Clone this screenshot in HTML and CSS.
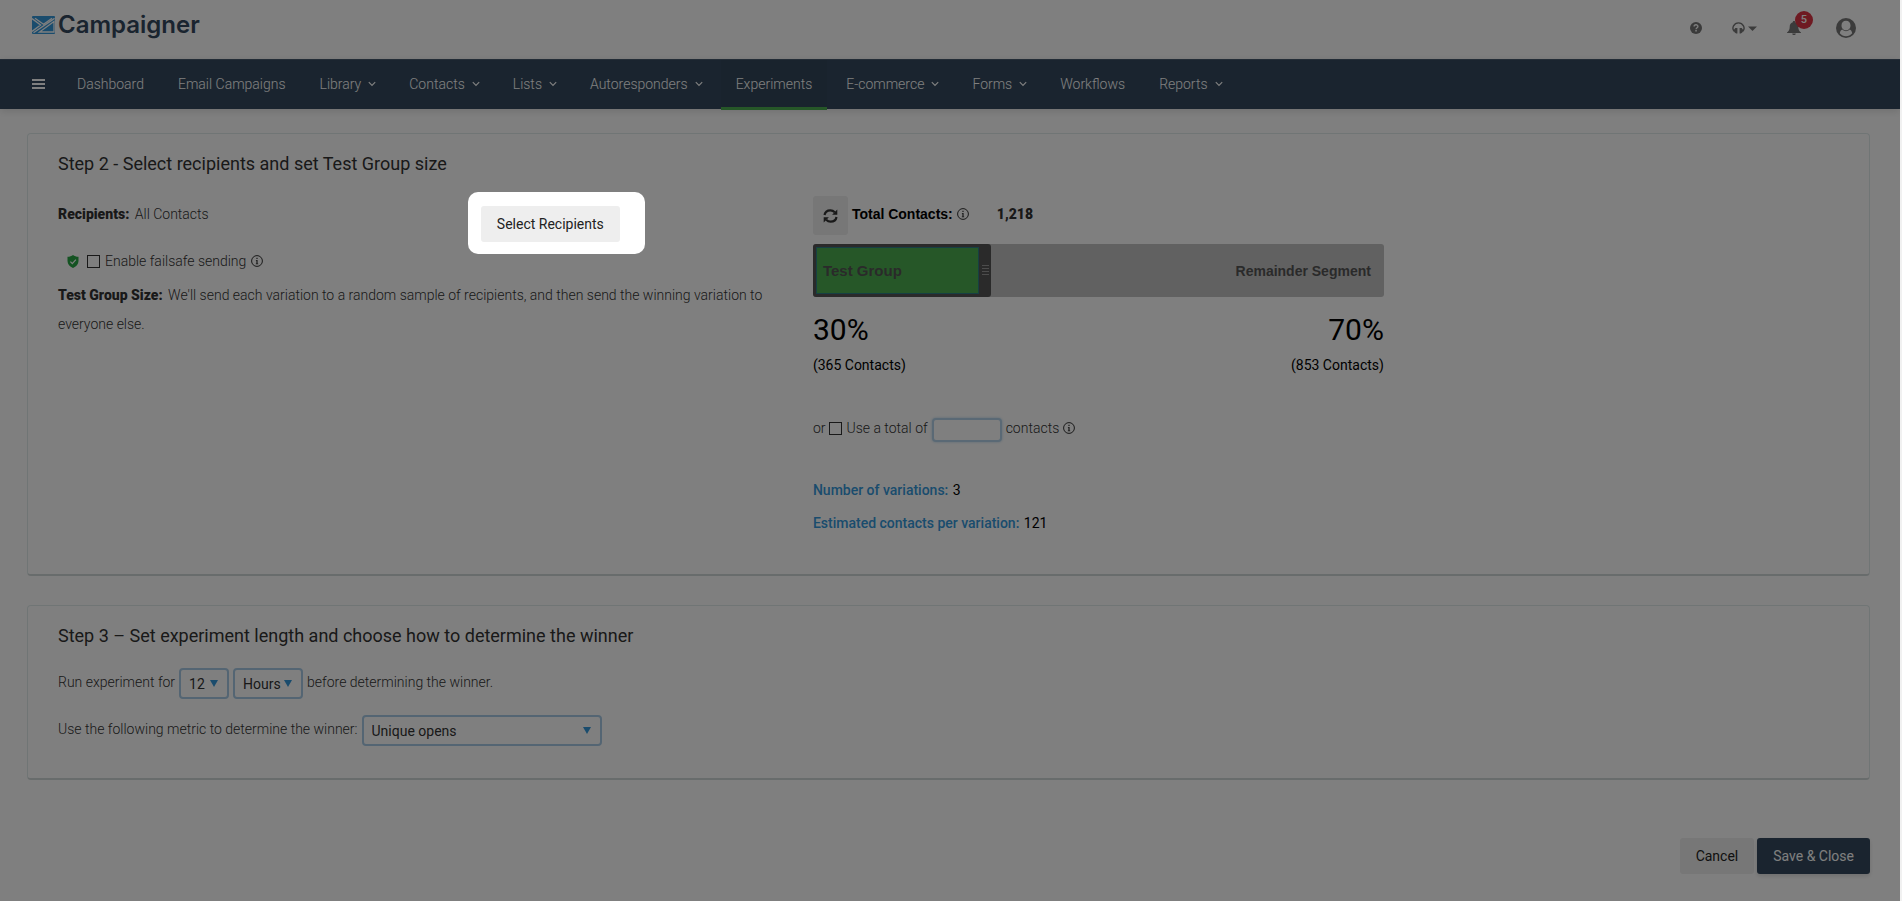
FILE: index.html
```html
<!DOCTYPE html>
<html lang="en">
<head>
  <meta charset="UTF-8" />
  <meta name="viewport" content="width=device-width, initial-scale=1.0"/>
  <title>Experiments | Campaigner</title>
  <link rel="stylesheet" href="styles.css">
</head>
<body>
  <svg class="sprite" aria-hidden="true">
    <symbol id="icon-info" viewBox="0 0 12 12">
      <circle cx="6" cy="6" r="5.4" fill="none" stroke="currentColor" stroke-width="1"/>
      <path d="M5.400 2.700h1.200v1.200H5.400zM4.900 5h1.700v3.400h.6v.8H4.800v-.8h.6V5.800h-.5z" fill="currentColor"/>
    </symbol>
    <symbol id="icon-chevron" viewBox="0 0 8 8">
      <path d="M.8 2.200L4 5.400l3.200-3.200" fill="none" stroke="currentColor" stroke-width="1.200"/>
    </symbol>
  </svg>

  <header class="top-header">
    <a href="#" class="logo">
      <svg width="23" height="18" viewBox="0 0 23 18">
        <rect width="23" height="18" rx="1" fill="#3498db"/>
        <path d="M0 2.600L8.600 9 0 15.400M3 2.300l8.500 6L20 2.300M22.600 2.400L1.500 16.800M22 5.500V16H7.500z" fill="none" stroke="#fff" stroke-width="1.300"/>
      </svg>
      <span>Campaigner</span>
    </a>
    <div class="header-actions">
      <button type="button" class="icon-btn" aria-label="Help">
        <svg width="12" height="12" viewBox="0 0 12 12">
          <circle cx="6" cy="6" r="6" fill="currentColor"/>
          <path d="M4.100 4.600c0-2.400 3.800-2.400 3.800-.1C7.900 5.800 6.100 5.700 6.100 7.200" fill="none" stroke="#fff" stroke-width="1.400"/>
          <path d="M5.300 8.100h1.500v1.500H5.300z" fill="#fff"/>
        </svg>
      </button>
      <button type="button" class="icon-btn" aria-label="Support">
        <svg width="25" height="12" viewBox="0 0 25 12">
          <path d="M2.200 9.300C-.8 6 2 .9 6.500.9s7.300 5.100 4.300 8.400" fill="none" stroke="currentColor" stroke-width="1.400"/>
          <path d="M3.300 6h2.100v5.500H4.300C3 11 1.800 9.500 1.600 8.200zM9.700 6H7.600v5.500h1.100c1.300-.5 2.500-2 2.700-3.300z" fill="currentColor"/>
          <path d="M16 4.500h9L20.500 9z" fill="currentColor"/>
        </svg>
      </button>
      <button type="button" class="icon-btn bell" aria-label="Notifications">
        <svg width="14" height="14" viewBox="0 0 14 14">
          <path d="M7 0c.8 0 1.200.5 1.200 1.200C10.500 1.800 11.300 3.500 11.300 6c0 2.800 1 4.300 2.700 5.500v.6H0v-.6C1.700 10.300 2.700 8.800 2.700 6c0-2.500.8-4.200 3.100-4.800C5.800.5 6.200 0 7 0zM5.200 12.500h3.600c0 2-3.600 2-3.600 0z" fill="currentColor"/>
        </svg>
        <span class="badge">5</span>
      </button>
      <button type="button" class="icon-btn" aria-label="Account">
        <svg width="20" height="20" viewBox="0 0 20 20">
          <circle cx="10" cy="10" r="10" fill="currentColor"/>
          <path d="M10 2.800c2.700 0 4.500 2 4.500 4.700S12.500 12.300 10 12.300 5.500 10.200 5.500 7.500 7.300 2.800 10 2.800zM3.800 15.300c.3-2 1.200-3.300 2.600-3.800 2 2.200 5.200 2.200 7.200 0 1.400.5 2.300 1.800 2.600 3.800-3.200 4-9.200 4-12.400 0z" fill="#fff"/>
        </svg>
      </button>
    </div>
  </header>

  <nav class="main-nav">
    <button type="button" class="menu-btn" aria-label="Menu">
      <svg width="13" height="10" viewBox="0 0 13 10"><path d="M0 1h13M0 5h13M0 9h13" stroke="currentColor" stroke-width="2"/></svg>
    </button>
    <a href="#">Dashboard</a>
    <a href="#">Email Campaigns</a>
    <a href="#">Library <svg class="chevron"><use href="#icon-chevron"/></svg></a>
    <a href="#">Contacts <svg class="chevron"><use href="#icon-chevron"/></svg></a>
    <a href="#">Lists <svg class="chevron"><use href="#icon-chevron"/></svg></a>
    <a href="#">Autoresponders <svg class="chevron"><use href="#icon-chevron"/></svg></a>
    <a href="#" class="active">Experiments</a>
    <a href="#">E-commerce <svg class="chevron"><use href="#icon-chevron"/></svg></a>
    <a href="#">Forms <svg class="chevron"><use href="#icon-chevron"/></svg></a>
    <a href="#">Workflows</a>
    <a href="#">Reports <svg class="chevron"><use href="#icon-chevron"/></svg></a>
  </nav>

  <main class="content">
    <section class="card">
      <h2>Step 2 - Select recipients and set Test Group size</h2>
      <div class="step-columns">
        <div class="step-left">
          <div class="recipients-row">
            <div><strong>Recipients:</strong> All Contacts</div>
            <div class="spotlight">
              <button type="button" class="btn btn-light">Select Recipients</button>
            </div>
          </div>
          <div class="failsafe-row">
            <svg width="12" height="13" viewBox="0 0 12 13">
              <path d="M6 0c1.500 1.200 3.300 1.800 5.500 1.800V6c0 3.300-2.300 5.800-5.500 7C2.800 11.800.5 9.300.5 6V1.800C2.700 1.800 4.500 1.200 6 0z" fill="#28a745"/>
              <path d="M3.400 6.700l1.900 1.900 3.600-4" fill="none" stroke="#fff" stroke-width="1.200"/>
            </svg>
            <input type="checkbox" id="failsafe">
            <label for="failsafe">Enable failsafe sending</label>
            <svg class="info"><use href="#icon-info"/></svg>
          </div>
          <p><strong>Test Group Size:</strong> We'll send each variation to a random sample of recipients, and then send the winning variation to everyone else.</p>
        </div>

        <div class="step-right">
          <div class="total-row">
            <button type="button" class="refresh-btn" aria-label="Refresh">
              <svg width="15" height="14" viewBox="0 0 15 14">
                <path d="M1.500 6C2 3 4.500 1.300 7.400 1.300c1.800 0 3.200.7 4.400 1.900M13.500 8c-.5 3-3 4.700-5.900 4.700-1.800 0-3.200-.7-4.400-1.900" fill="none" stroke="currentColor" stroke-width="2.200"/>
                <path d="M14.300.6v5.200H9.100zM.7 13.400V8.200h5.200z" fill="currentColor"/>
              </svg>
            </button>
            <span class="total-label">Total Contacts:</span>
            <svg class="info"><use href="#icon-info"/></svg>
            <strong class="total-count">1,218</strong>
          </div>
          <div class="split-bar">
            <div class="test-group" style="width: 32%">
              <span>Test Group</span>
              <i class="grip"></i>
            </div>
            <span class="remainder">Remainder Segment</span>
          </div>
          <div class="split-values">
            <div>
              <div class="percent">30%</div>
              <div class="count">(365 Contacts)</div>
            </div>
            <div class="right">
              <div class="percent">70%</div>
              <div class="count">(853 Contacts)</div>
            </div>
          </div>
          <div class="use-total">
            <span>or</span>
            <input type="checkbox" id="use-total">
            <label for="use-total">Use a total of</label>
            <input type="text" class="total-input" aria-label="Total contacts">
            <span>contacts</span>
            <svg class="info"><use href="#icon-info"/></svg>
          </div>
          <div class="stat"><b>Number of variations:</b> 3</div>
          <div class="stat"><b>Estimated contacts per variation:</b> 121</div>
        </div>
      </div>
    </section>

    <section class="card">
      <h2>Step 3 – Set experiment length and choose how to determine the winner</h2>
      <div class="form-row">
        <label for="length">Run experiment for</label>
        <span class="select-wrap length"><select id="length"><option>12</option><option>24</option></select></span>
        <span class="select-wrap unit"><select id="unit" aria-label="Unit"><option>Hours</option><option>Days</option></select></span>
        <span>before determining the winner.</span>
      </div>
      <div class="form-row">
        <label for="metric">Use the following metric to determine the winner:</label>
        <span class="select-wrap metric"><select id="metric"><option>Unique opens</option><option>Unique clicks</option></select></span>
      </div>
    </section>

    <div class="footer-actions">
      <button type="button" class="btn btn-light">Cancel</button>
      <button type="button" class="btn btn-dark">Save &amp; Close</button>
    </div>
  </main>
</body>
</html>
```
FILE: styles.css
```css
* {
  box-sizing: border-box;
}
body {
  margin: 0;
  min-height: 100vh;
  overflow: hidden;
  background: #fff;
  border-right: 2px solid #f1f1f1;
  font-family: Roboto, Arial, sans-serif;
  font-size: 14px;
  font-weight: 300;
  color: #333;
}
button, input, select {
  font-family: inherit;
  font-size: 14px;
}
.sprite {
  position: absolute;
  width: 0;
  height: 0;
}

/* header */
.top-header {
  height: 59px;
  padding: 0 44px 0 32px;
  display: flex;
  justify-content: space-between;
}
.logo {
  display: flex;
  align-items: center;
  gap: 3px;
  height: 49px;
  font-family: Inter, sans-serif;
  font-size: 24px;
  font-weight: 600;
  color: #34495e;
  text-decoration: none;
}
.header-actions {
  display: flex;
  align-items: center;
  gap: 30px;
  height: 55px;
}
.icon-btn {
  display: flex;
  padding: 0;
  border: none;
  background: none;
  color: #777;
}
.bell {
  position: relative;
}
.header-actions .icon-btn:last-child {
  margin-left: 5px;
}
.badge {
  position: absolute;
  left: 8px;
  top: -10px;
  width: 18px;
  height: 18px;
  border-radius: 9px;
  background: #dc3545;
  color: #fff;
  font-size: 11px;
  font-weight: 500;
  line-height: 18px;
  text-align: center;
}

/* nav */
.main-nav {
  display: flex;
  gap: 4px;
  height: 50px;
  padding-left: 32px;
  background: #34495e;
  border-top: 1px solid #46586c;
  box-shadow: 0 2px 8px #0002;
}
.main-nav a {
  display: flex;
  align-items: center;
  gap: 7px;
  height: 50px;
  padding: 0 15px;
  border-bottom: 3px solid transparent;
  color: #fff;
  text-decoration: none;
}
.main-nav a.active {
  background: #32465a;
  border-bottom-color: #4caf50;
}
.menu-btn {
  width: 26px;
  height: 47px;
  padding: 0;
  border: none;
  background: none;
  color: #fff;
  text-align: left;
}
.chevron {
  width: 8px;
  height: 8px;
  margin-right: -1px;
}

/* cards */
.content {
  padding: 24px 30px 24px 27px;
}
.card {
  margin-bottom: 29px;
  padding: 18px 30px 32px;
  border: 1px solid #e0ebeb;
  border-bottom: 2px solid #d0d8d8;
  border-radius: 4px;
}
.card h2 {
  margin: 0 0 20px;
  font-size: 18px;
  font-weight: 400;
  line-height: 24px;
}
.step-columns {
  display: grid;
  grid-template-columns: 5fr 7fr;
  gap: 22px;
}
.recipients-row {
  display: grid;
  grid-template-columns: 15fr 11fr;
  line-height: 36px;
}
.step-left p {
  margin: 1px 0 0;
  line-height: 29px;
}
strong {
  margin-right: 2px;
  font-weight: 900;
}

/* the dimmed backdrop is the shadow of the highlighted area */
.spotlight {
  position: relative;
  justify-self: start;
  margin-top: 10px;
}
.spotlight::after {
  content: "";
  position: absolute;
  z-index: 10;
  inset: -14px -25px -12px -13px;
  border-radius: 10px;
  box-shadow: 0 0 0 3000px rgba(0, 0, 0, 0.5);
  pointer-events: none;
}
.btn {
  display: block;
  height: 36px;
  padding: 0 16px;
  border: none;
  border-radius: 3px;
  font-weight: 400;
}
.btn-light {
  background: #eee;
  color: #222;
}
.btn-dark {
  background: #34495e;
  color: #fff;
  box-shadow: 0 2px 4px #0002;
}
.failsafe-row {
  display: flex;
  align-items: center;
  gap: 5px;
  height: 38px;
  padding-left: 9px;
}
.failsafe-row input {
  margin-left: 3px;
}
input[type="checkbox"] {
  appearance: none;
  width: 13px;
  height: 13px;
  margin: 0;
  border: 1px solid #333;
}
.failsafe-row input[type="checkbox"] {
  margin-left: 3px;
}
.info {
  width: 12px;
  height: 12px;
}

/* test group size */
.step-right {
  max-width: 571px;
  color: #000;
}
.total-row {
  display: flex;
  align-items: center;
  gap: 4px;
  height: 36px;
}
.refresh-btn {
  display: flex;
  align-items: center;
  align-self: flex-start;
  justify-content: center;
  width: 35px;
  height: 39px;
  padding: 0;
  border: none;
  border-radius: 3px;
  background: #eee;
  color: #333;
}
.total-label,
.split-bar {
  font-family: "Liberation Sans", Arial, sans-serif;
  font-weight: 700;
}
.total-row .info {
  color: #333;
}
.total-count {
  margin-left: 24px;
  color: #333;
}
.split-bar {
  display: flex;
  align-items: center;
  justify-content: space-between;
  height: 53px;
  margin-top: 12px;
  padding-right: 13px;
  border-radius: 3px;
  background: #c2c2c2;
  color: #555;
}
.test-group {
  display: flex;
  align-items: center;
  justify-content: space-between;
  height: 53px;
  padding-left: 7px;
  border: 3px solid #555;
  border-right-width: 12px;
  border-radius: 3px;
  background: #4caf50;
  box-shadow: inset 0 0 0 1px #2f7f86;
  font-size: 15px;
}
.grip {
  width: 7px;
  height: 11px;
  margin-right: -10px;
  background: repeating-linear-gradient(#999 0 1px, transparent 1px 3px);
}
.split-values {
  display: flex;
  justify-content: space-between;
  margin-top: 15px;
  font-weight: 400;
}
.right {
  text-align: right;
}
.percent {
  font-size: 30px;
  line-height: 36px;
}
.count {
  margin-top: 7px;
  line-height: 20px;
}
.use-total {
  display: flex;
  align-items: flex-start;
  gap: 4px;
  margin: 43px 0 32px;
  color: #333;
  line-height: 20px;
}
.use-total .info,
.use-total input[type="checkbox"] {
  margin-top: 4px;
}
.total-input {
  width: 70px;
  height: 24px;
  border: 2px solid #b5d3ea;
  border-radius: 4px;
  background: #fff;
  box-shadow: 0 0 3px #b5d3ea;
}
.stat {
  line-height: 33px;
  font-weight: 400;
}
.stat b {
  margin-right: 1px;
  color: #3498db;
  font-weight: 500;
}
.step-right {
  padding-bottom: 2px;
}

/* step 3 */
.form-row {
  display: flex;
  align-items: flex-start;
  gap: 4px;
  line-height: 28px;
}
.form-row + .form-row {
  margin-top: 16px;
}
.select-wrap {
  position: relative;
}
.select-wrap::after {
  content: "";
  position: absolute;
  right: 11px;
  top: 12px;
  border: 4px solid transparent;
  border-top: 7px solid #3498db;
  border-bottom: none;
  pointer-events: none;
}
.select-wrap select {
  display: block;
  appearance: none;
  width: 100%;
  height: 31px;
  padding: 0 8px;
  border: 2px solid #a9cbe6;
  border-radius: 4px;
  background: #fff;
  color: #333;
  font-weight: 400;
}
.length {
  width: 50px;
}
.unit {
  width: 70px;
}
.metric {
  width: 240px;
}
.footer-actions {
  display: flex;
  justify-content: flex-end;
  gap: 3px;
  margin-top: 58px;
}
```
